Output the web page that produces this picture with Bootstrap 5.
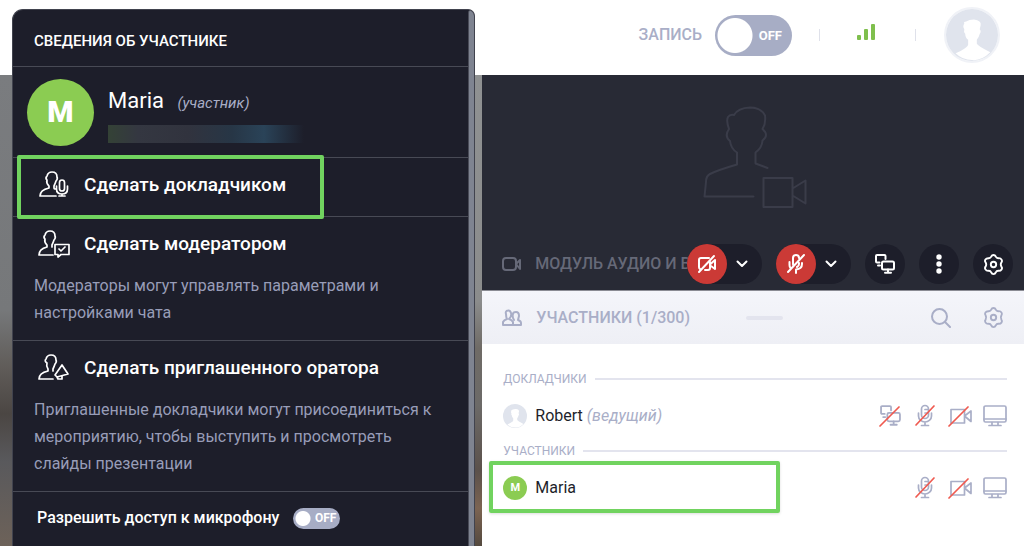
<!DOCTYPE html>
<html lang="ru">
<head>
<meta charset="utf-8">
<meta name="viewport" content="width=device-width, initial-scale=1">
<title>Сведения об участнике</title>
<link href="https://cdn.jsdelivr.net/npm/bootstrap@5.3.0/dist/css/bootstrap.min.css" rel="stylesheet">
<style>
  :root { --ink:#1d1e2a; --muted:#a9aec7; --rule:#484a55; --hint:#71d35f; --leaf:#8bcc52; }
  body { font-family: Roboto, "Liberation Sans", sans-serif; font-size:16px; line-height:24px; color:#1e1f2b; background:#fff; }
  .icon { fill:none; stroke:currentColor; stroke-width:2; stroke-linecap:round; stroke-linejoin:round; flex:none; display:block; }
  .app { min-height:100vh; overflow:hidden; }
  .topbar { height:75px; padding:0 24px 5px 0; }
  .record-label { font-size:16px; font-weight:500; color:var(--muted); margin-right:13px; }
  .tick { width:1px; height:12px; background:#dfe1ea; }
  .tick-start { margin:0 36px 0 27px; }
  .tick-end { margin:0 28px 0 39px; }

  .toggle { display:inline-grid; cursor:pointer; color:#fff; font-weight:700; line-height:1; align-items:center; }
  .toggle > * { grid-area:1/1; }
  .toggle input { appearance:none; margin:0; width:77px; height:41px; border-radius:21px;
    background:radial-gradient(circle at 20px 50%, #fff 17px, transparent 18px) #a7adc5; }
  .toggle span { justify-self:end; padding-right:10px; font-size:13px; }
  .toggle-sm { margin-left:14px; }
  .toggle-sm input { width:47px; height:21px; background:radial-gradient(circle at 10px 50%, #fff 7px, transparent 8px) #a7adc5; }
  .toggle-sm span { padding-right:4px; font-size:12px; }

  .stage { width:47.1%; flex:none; background:linear-gradient(#7a7c7f 0, #76787a 50%, #605c59 62%, #4b4643 72%, #59595c 82%, #6d6259 100%); }
  .stage-edge { width:7px; background:linear-gradient(#8f9192 0, #8b8c8c 48%, #6f6b66 58%, #6c6a68 70%, #5b514b 84%, #7c6452 92%, #54493f 100%); }
  .side { min-width:0; }

  .video { background:#282a35; height:216px; border-bottom:1px solid #8a8b93; }
  .video-bar { padding:0 11px 6px 20px; color:#666978; }
  .video-title { font-weight:500; min-width:0; white-space:nowrap; margin-left:13px; }
  .ghost { color:#3a3c49; padding:0 0 34px 4px; }
  .controls { gap:14px; }
  .pill, .round { background:var(--ink); color:#fff; border:0; padding:0; height:40px; border-radius:20px; }
  .pill { width:75px; }
  .round, .pill-main { width:40px; height:40px; display:grid; place-items:center; }
  .pill-main { background:#cb3a36; color:#fff; border:0; padding:0; border-radius:50%; }
  .pill-more { background:none; border:0; color:#fff; width:30px; padding:0; display:grid; place-items:center; }
  .people-bar { height:53px; padding:0 19px 0 20px; background:linear-gradient(#f4f5fa, #eeeff5); color:var(--muted); font-weight:500; }
  .people-title { margin:0 56px 0 14px; }
  .grip { width:37px; height:4px; border-radius:2px; background:#e3e4ee; }
  .plain { background:none; border:0; padding:0; color:var(--muted); }
  .people-gear { margin-left:31px; }
  .people { padding:27px 17px 0 21px; }
  .group-label { font-size:12px; line-height:16px; color:var(--muted); font-weight:400; margin:0; }
  .group-rule { height:2px; background:#e3e4ee; }
  .person { height:56px; padding-top:2px; }
  .person em { color:var(--muted); }
  .states { color:var(--muted); gap:11px; }
  .states .icon { stroke-width:1.7; }
  .off-stroke { stroke:#ef5a50; }
  .dot-avatar { width:24px; height:24px; border-radius:50%; background:var(--leaf); color:#fff; font-size:11px; font-weight:700; display:grid; place-items:center; }

  .details { top:9px; left:12px; bottom:0; width:45.2%; background:var(--ink); border:1px solid #41434e; border-bottom:0; border-radius:11px 7px 0 0; color:#fff; overflow:hidden; }
  .details-body { min-width:0; }
  .details-scroll { width:6px; background:#7f8491; border-left:1px solid #4a4c58; border-radius:4px 4px 0 0; flex:none; }
  .details section, .details header { border-bottom:1px solid var(--rule); }
  .details h2 { font-size:15px; line-height:24px; font-weight:500; margin:0; padding:19px 21px 13px; }
  .details .who { height:91px; padding:0 14px; }
  .who-text { margin-left:14px; padding-top:5px; }
  .big-avatar { width:67px; height:67px; border-radius:50%; background:var(--leaf); font-size:30px; font-weight:900; display:grid; place-items:center; flex:none; }
  .who-name { font-size:22px; line-height:28px; }
  .who-role { font-size:15px; color:var(--muted); font-style:italic; }
  .smudge { width:200px; height:18px; background:linear-gradient(90deg, #344236 0, #343741 15%, #31333e 40%, #273646 62%, #2a4358 78%, #1d1e2a 98%); }
  .option { padding:13px 21px 14px; }
  .option-first { padding-bottom:17px; }
  .action { background:none; border:0; color:#fff; font-size:19px; line-height:28px; font-weight:500; padding:0 0 0 4px; text-align:left; gap:14px; }
  .action .icon { stroke-width:1.7; }
  .note { color:#989db8; font-size:16px; line-height:27px; margin:14px 0 0; }
  .permission { padding:14px 24px; font-weight:500; }
  .marked { border:4px solid var(--hint); border-radius:2px; pointer-events:none; }
  .mark-action { left:4px; top:-3px; width:307px; height:64px; }
  .mark-person { left:-14px; top:2px; width:291px; height:52px; box-shadow:0 1px 3px #0002; }
</style>
</head>
<body>
<svg width="0" height="0" class="position-absolute" aria-hidden="true">
  <symbol id="face" viewBox="0 0 54 54"><circle cx="27" cy="27" r="27" fill="#e0e4ed" stroke="none"/><path fill="#fff" stroke="none" d="M19 15q-1-2 2-2 3-2 8-2 8 1 7 6l-1 4q2 2 0 5-1 4-3 6v4q1 2 14 9-9 9-19 8-10 0-17-7 13-6 13-9v-5q-3-2-3-6-2-2-1-5-2-3 0-6z"/></symbol>
  <symbol id="gear" viewBox="0 0 24 24"><path d="M9.600 3.800Q10.300 2 12 2T14.400 3.800Q15.300 5.600 17.200 5.400 19.400 5.200 20.400 6.900T20.200 9.900Q19 12 20.200 14.100 21.400 15.500 20.400 17.100T17.200 18.600Q15.300 18.400 14.400 20.200 13.700 22 12 22T9.600 20.200Q8.700 18.400 6.800 18.600 4.600 18.800 3.600 17.100T3.800 14.100Q5 12 3.800 9.900 2.600 8.500 3.600 6.900T6.800 5.400Q8.700 5.600 9.600 3.800z"/><circle cx="12" cy="12" r="2.800"/></symbol>
  <symbol id="screens" viewBox="0 0 20 20"><path d="M4.500 8.500H2Q1 8.500 1 7.500V2Q1 1 2 1H9.500Q10.500 1 10.500 2V5M3 11.500H5M13 15.500V18.500M10 18.800H16"/><rect x="7" y="7.500" width="12" height="8" rx="1.500"/></symbol>
  <symbol id="mic" viewBox="0 0 24 24"><rect x="8.500" y="1.500" width="7" height="13" rx="3.500"/><path d="M5.500 9v3a6.500 6 0 0 0 13 0V9M12 18v3M8.500 21.500h7M12 5.500h3M12 9h3"/></symbol>
  <symbol id="camera" viewBox="0 0 24 24"><path d="M3 5.500H16.500V19H3ZM16.500 12 23 7V17.500Z"/></symbol>
  <symbol id="monitor" viewBox="0 0 24 24"><rect x="1" y="2" width="22" height="16" rx="1.500"/><path d="M1 15H23M9 18.500V21M15 18.500V21M6 21.500H18"/></symbol>
  <symbol id="chevron" viewBox="0 0 12 8"><path d="M1.500 1.500 6 6l4.500-4.500"/></symbol>
</svg>

<div class="app position-relative d-flex flex-column">
  <header class="topbar d-flex align-items-center justify-content-end">
    <label class="record-label" for="rec">ЗАПИСЬ</label>
    <label class="toggle"><input type="checkbox" role="switch" id="rec"><span>OFF</span></label>
    <span class="tick tick-start"></span>
    <svg class="mb-1" width="20" height="20" viewBox="0 0 20 20" fill="#7fbf4d" role="img" aria-label="Качество связи"><rect x="1" y="12" width="4" height="5" rx="1"/><rect x="8" y="6" width="4" height="11" rx="1"/><rect x="15" y="1" width="4" height="16" rx="1"/></svg>
    <span class="tick tick-end"></span>
    <button class="plain rounded-circle" aria-label="Профиль" type="button"><svg class="icon" width="56" height="56" viewBox="-1 -1 56 56"><circle cx="27" cy="27" r="27" stroke="#f0f2f7" stroke-width="2"/><use href="#face" x="1" y="1" width="52" height="52"/></svg></button>
  </header>

  <main class="d-flex flex-grow-1">
    <div class="stage d-flex justify-content-end"><div class="stage-edge"></div></div>
    <div class="side flex-grow-1">
      <section class="video d-flex flex-column">
        <div class="ghost flex-grow-1 d-flex justify-content-center align-items-end">
          <svg class="icon" width="106" height="104" viewBox="0 0 106 104"><path d="M35 58.500V46.500Q29 43 28 35q-6-5-1-12-3-8-1-12 2-3 6-2 4-7 16-7.500 11 0 15 8 1 8-2.500 13.500 7 6 0 11.500Q60 42 53.500 46.500v11l12 4.500M35 58.500Q16 64 8 68 4 70 4 76L2.500 90.500h49M61.500 72H90.500V101H61.500ZM90.500 82.500 103.500 74.500V97.500L90.500 89.500"/></svg>
        </div>
        <div class="video-bar d-flex align-items-center">
          <svg class="icon" width="20" height="16" viewBox="0 0 20 16"><rect x="1" y="2" width="13" height="12" rx="3"/><path d="M14 8l4-4v9z"/></svg>
          <span class="video-title flex-grow-1">МОДУЛЬ АУДИО И В</span>
          <div class="controls d-flex flex-shrink-0 position-relative">
            <div class="pill d-flex"><button class="pill-main" type="button" aria-label="Включить камеру"><svg class="icon" width="20" height="20" viewBox="0 0 20 20"><path d="M12 4H4Q2 4 2 6V13Q2 14.500 3 15M8 16H11Q13 16 13 14V8M13.500 10l4.500-4v9l-4-3M2 18 17 2"/></svg></button><button class="pill-more" type="button" aria-label="Выбрать камеру"><svg class="icon" width="12" height="8"><use href="#chevron"/></svg></button></div>
            <div class="pill d-flex"><button class="pill-main" type="button" aria-label="Включить микрофон"><svg class="icon" width="20" height="22" viewBox="0 0 20 22"><path d="M13 5a3 3 0 0 0-6 0v6q0 1 .5 1.500M13 10v1q0 2-2 3M3.500 9v3q0 2 1 3M16 10v1q0 5-6 5.500M10 17v3M2 19 18 2"/></svg></button><button class="pill-more" type="button" aria-label="Выбрать микрофон"><svg class="icon" width="12" height="8"><use href="#chevron"/></svg></button></div>
            <button class="round" type="button" aria-label="Демонстрация экрана"><svg class="icon" width="20" height="20"><use href="#screens"/></svg></button>
            <button class="round" type="button" aria-label="Ещё"><svg width="6" height="20" viewBox="0 0 6 20" fill="#fff"><circle cx="3" cy="3" r="2.700"/><circle cx="3" cy="10" r="2.700"/><circle cx="3" cy="17" r="2.700"/></svg></button>
            <button class="round" type="button" aria-label="Настройки видео"><svg class="icon" width="23" height="23"><use href="#gear"/></svg></button>
          </div>
        </div>
      </section>

      <section class="people-bar d-flex align-items-center">
        <svg class="icon" width="20" height="18" viewBox="0 0 20 18"><path d="M1 16h10v-3q-1-2-4-3 3-3 2-6-1-3-3-2.500Q3 2 4 5q0 3 1 5-3 1-4 3zM11 5q0-2 3-2 3 0 3 4l-1 4q3 1 3 3v2h-8M12 11q-2-3-1-6"/></svg>
        <span class="people-title">УЧАСТНИКИ (1/300)</span>
        <span class="grip"></span>
        <button class="plain ms-auto" type="button" aria-label="Поиск"><svg class="icon" width="20" height="20" viewBox="0 0 20 20"><circle cx="8.500" cy="8.500" r="7.500"/><path d="M14 14l5 5"/></svg></button>
        <button class="plain people-gear" type="button" aria-label="Настройки списка"><svg class="icon" width="23" height="23"><use href="#gear"/></svg></button>
      </section>

      <section class="people">
        <div class="d-flex align-items-center gap-2"><h3 class="group-label">ДОКЛАДЧИКИ</h3><span class="group-rule flex-grow-1"></span></div>
        <div class="person d-flex align-items-center">
          <svg class="icon" width="24" height="24"><use href="#face"/></svg>
          <span class="ms-2">Robert <em>(ведущий)</em></span>
          <span class="states ms-auto d-flex">
            <svg class="icon" width="24" height="24" viewBox="0 0 24 24"><use href="#screens" x="2" y="1" width="21" height="21"/><path class="off-stroke" d="M2 22 21 3"/></svg>
            <svg class="icon" width="24" height="24" viewBox="0 0 24 24"><use href="#mic"/><path class="off-stroke" d="M3 21 21 2"/></svg>
            <svg class="icon" width="24" height="24" viewBox="0 0 24 24"><use href="#camera"/><path class="off-stroke" d="M1 22 20 3"/></svg>
            <svg class="icon" width="24" height="24"><use href="#monitor"/></svg>
          </span>
        </div>
        <div class="d-flex align-items-center gap-2"><h3 class="group-label">УЧАСТНИКИ</h3><span class="group-rule flex-grow-1"></span></div>
        <div class="person d-flex align-items-center position-relative">
          <span class="dot-avatar">М</span>
          <span class="ms-2">Maria</span>
          <span class="states ms-auto d-flex">
            <svg class="icon" width="24" height="24" viewBox="0 0 24 24"><use href="#mic"/><path class="off-stroke" d="M3 21 21 2"/></svg>
            <svg class="icon" width="24" height="24" viewBox="0 0 24 24"><use href="#camera"/><path class="off-stroke" d="M1 22 20 3"/></svg>
            <svg class="icon" width="24" height="24"><use href="#monitor"/></svg>
          </span>
          <span class="marked mark-person position-absolute"></span>
        </div>
      </section>
    </div>
  </main>

  <aside class="details position-absolute d-flex">
    <div class="details-body flex-grow-1">
      <header><h2>СВЕДЕНИЯ ОБ УЧАСТНИКЕ</h2></header>
      <section class="who d-flex align-items-center">
        <span class="big-avatar">M</span>
        <div class="who-text">
          <div class="who-name">Maria <span class="who-role ms-2">(участник)</span></div>
          <div class="smudge mt-2"></div>
        </div>
      </section>
      <section class="option option-first position-relative">
        <button class="action d-flex align-items-center" type="button"><svg class="icon" width="32" height="28" viewBox="0 0 32 28"><path d="M11 17v-2q-3-3-2-6-2-2 0-4Q10 1 14 1q5 0 5 5 1 2-1 4-1 3-2 5v2q0 1 2 1M11 17Q2 19 2 25H18"/><rect x="21.500" y="9" width="5" height="11" rx="2.500"/><path d="M18.500 15v3q0 5 5.500 5t5.500-5v-3M24 23v2M21 25h6"/></svg>Сделать докладчиком</button>
        <span class="marked mark-action position-absolute"></span>
      </section>
      <section class="option">
        <button class="action d-flex align-items-center" type="button"><svg class="icon" width="32" height="28" viewBox="0 0 32 28"><path d="M9 17v-2Q6 12 7 9 5 7 7 5 8 1 12 1q5 0 5 5 1 2-1 4-1 3-2 5v2M9 17Q1 19 1 25H15"/><path d="M17 14.500H31V24.500H23L20 27V24.500H17ZM21 19l2 2 4-4"/></svg>Сделать модератором</button>
        <p class="note">Модераторы могут управлять параметрами и настройками чата</p>
      </section>
      <section class="option">
        <button class="action d-flex align-items-center" type="button"><svg class="icon" width="32" height="28" viewBox="0 0 32 28"><path d="M10 17v-2Q8 12 9 9 6 7 8 5 9 1 13 1q5 0 5 5 1 2-1 4-1 3-2 5v2M10 17Q1 19 1 25H15"/><path d="M17 21 24 11 30 20 19 23ZM19 23l1 2 4 0v-3"/></svg>Сделать приглашенного оратора</button>
        <p class="note">Приглашенные докладчики могут присоединиться к мероприятию, чтобы выступить и просмотреть слайды презентации</p>
      </section>
      <div class="permission d-flex align-items-center">
        <label for="mic-access">Разрешить доступ к микрофону</label>
        <label class="toggle toggle-sm"><input type="checkbox" role="switch" id="mic-access"><span>OFF</span></label>
      </div>
    </div>
    <div class="details-scroll"></div>
  </aside>
</div>
<script src="https://cdn.jsdelivr.net/npm/bootstrap@5.3.0/dist/js/bootstrap.bundle.min.js"></script>
</body>
</html>
